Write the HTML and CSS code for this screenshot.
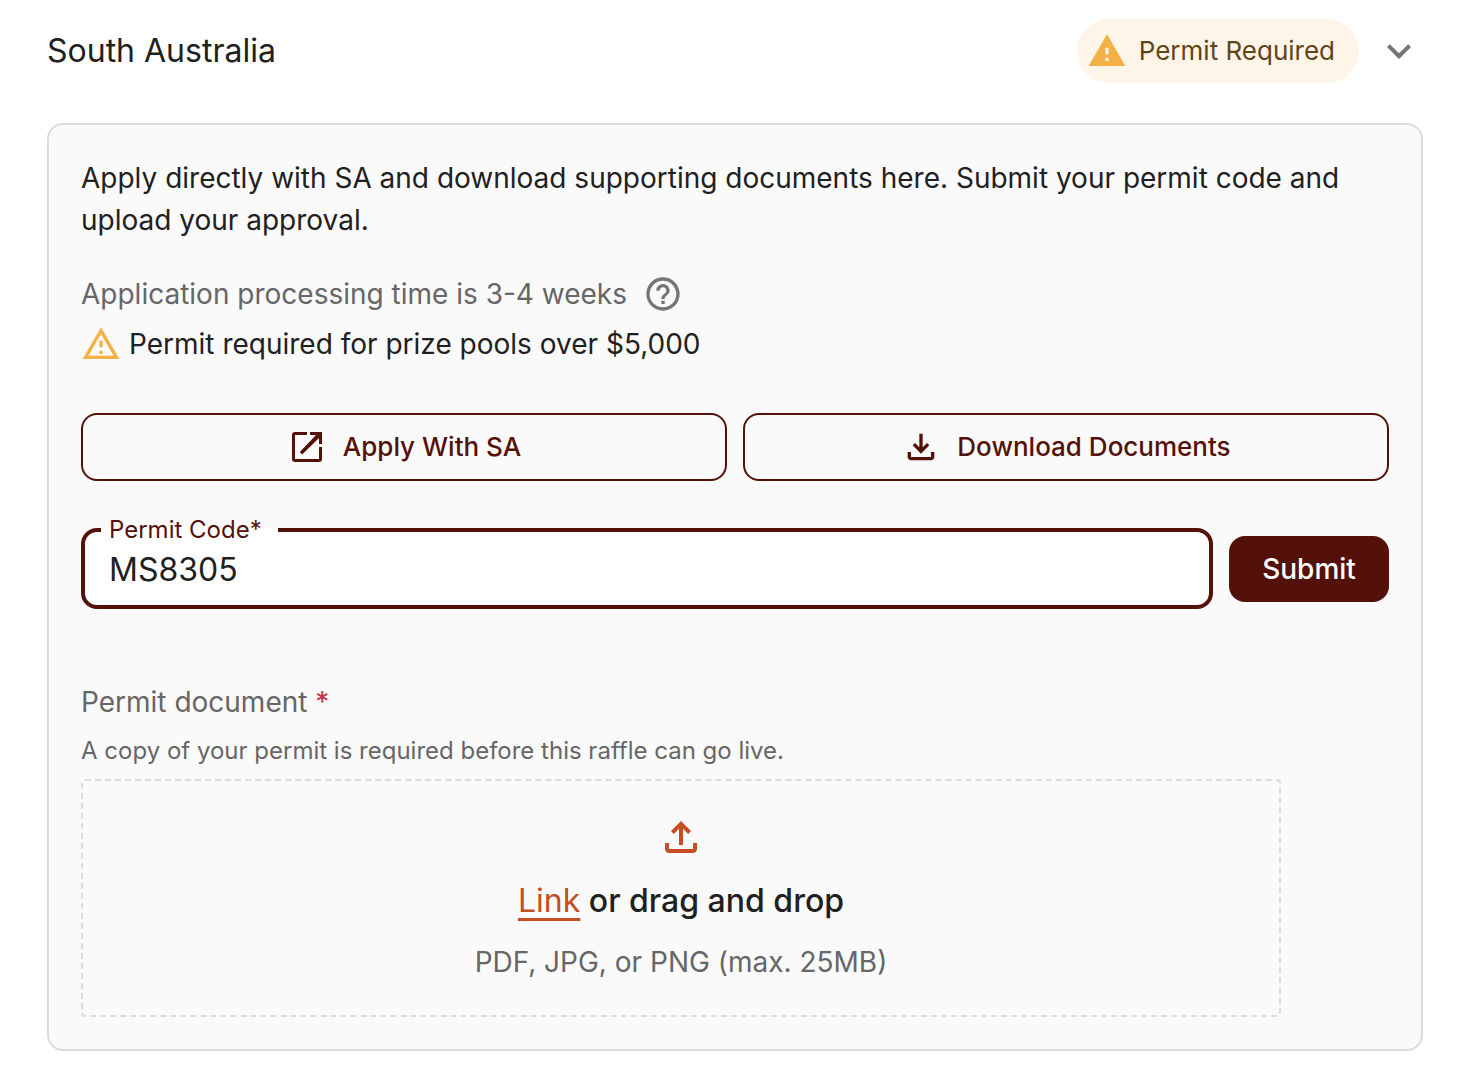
FILE: index.html
```html
<!DOCTYPE html>
<html lang="en">
<head>
    <meta charset="UTF-8">
    <meta name="viewport" content="width=device-width, initial-scale=1.0">
    <title>South Australia - Permit</title>
    <link rel="stylesheet" href="styles.css">
</head>
<body>
    <header class="state-header">
        <h1>South Australia</h1>
        <div class="state-status">
            <span class="badge">
                <svg class="icon icon-warning" viewBox="0 0 24 24" aria-hidden="true"><path d="M1 21h22L12 2 1 21zm12-3h-2v-2h2v2zm0-4h-2v-4h2v4z"/></svg>
                Permit Required
            </span>
            <button type="button" class="toggle" aria-label="Collapse South Australia" aria-expanded="true">
                <svg class="icon-large" viewBox="0 0 24 24" aria-hidden="true"><path d="M16.59 8.59 12 13.17 7.41 8.59 6 10l6 6 6-6z"/></svg>
            </button>
        </div>
    </header>

    <main class="card">
        <p class="intro">Apply directly with SA and download supporting documents here. Submit your permit code and upload your approval.</p>

        <div class="note note-time">
            <span>Application processing time is 3-4 weeks</span>
            <button type="button" class="help" aria-label="Help">
                <svg class="icon" viewBox="0 0 24 24" aria-hidden="true"><path d="M11 18h2v-2h-2v2zm1-16C6.48 2 2 6.48 2 12s4.48 10 10 10 10-4.48 10-10S17.52 2 12 2zm0 18c-4.41 0-8-3.59-8-8s3.59-8 8-8 8 3.59 8 8-3.59 8-8 8zm0-14c-2.21 0-4 1.79-4 4h2c0-1.1.9-2 2-2s2 .9 2 2c0 2-3 1.75-3 5h2c0-2.25 3-2.5 3-5 0-2.21-1.79-4-4-4z"/></svg>
            </button>
        </div>
        <div class="note note-limit">
            <svg class="icon icon-warning" viewBox="0 0 24 24" aria-hidden="true"><path d="M12 5.99 19.53 19H4.47L12 5.99M12 2 1 21h22L12 2zm1 14h-2v2h2v-2zm0-6h-2v4h2v-4z"/></svg>
            <span>Permit required for prize pools over $5,000</span>
        </div>

        <div class="actions">
            <button type="button" class="btn-outline">
                <svg class="icon" viewBox="0 0 40 40" aria-hidden="true">
                    <path class="stroke" d="M20 6.5H8Q6.500 6.500 6.500 8V32Q6.500 33.500 8 33.500H32Q33.500 33.500 33.500 32V20"/>
                    <path d="M23 5H35V17H32V11L15.200 27.400 12.800 25 29 8H23z"/>
                </svg>
                Apply With SA
            </button>
            <button type="button" class="btn-outline">
                <svg class="icon" viewBox="0 -960 960 960" aria-hidden="true"><path d="M480-320 280-520l56-58 104 104v-326h80v326l104-104 56 58-200 200ZM240-160q-33 0-56.500-23.500T160-240v-120h80v120h480v-120h80v120q0 33-23.500 56.500T720-160H240Z"/></svg>
                Download Documents
            </button>
        </div>

        <form class="permit-form">
            <fieldset class="field">
                <legend><label for="permit_code">Permit Code*</label></legend>
                <input type="text" id="permit_code" name="permit_code" value="MS8305" required>
            </fieldset>
            <button type="submit" class="btn-submit">Submit</button>
        </form>

        <h2>Permit document <span class="required">*</span></h2>
        <p class="hint">A copy of your permit is required before this raffle can go live.</p>

        <div class="dropzone">
            <svg class="icon-large" viewBox="0 -960 960 960" aria-hidden="true"><path d="M440-320v-326L336-542l-56-58 200-200 200 200-56 58-104-104v326h-80ZM240-160q-33 0-56.500-23.500T160-240v-120h80v120h480v-120h80v120q0 33-23.500 56.500T720-160H240Z"/></svg>
            <p class="drop-title"><a href="#">Link</a> or drag and drop</p>
            <p class="drop-types">PDF, JPG, or PNG (max. 25MB)</p>
        </div>
    </main>
</body>
</html>
```
FILE: styles.css
```css
* {
    box-sizing: border-box;
}
body {
    margin: 0;
    padding: 19px 53px 35px 47px;
    background-color: #fff;
    color: #1f2020;
    font-family: Inter, sans-serif;
    font-optical-sizing: none;
    font-size: 28px;
    line-height: 42px;
}
h1,
h2,
p {
    margin: 0;
    font-weight: 400;
}
button,
input {
    font: inherit;
    font-optical-sizing: none;
}
button {
    cursor: pointer;
}
svg {
    display: block;
    flex: none;
    fill: currentColor;
}
.icon {
    width: 40px;
    height: 40px;
}
.icon-large {
    width: 48px;
    height: 48px;
}
.icon-warning {
    color: #f3b044;
}

/* Header */
.state-header {
    display: flex;
    justify-content: space-between;
    align-items: center;
    margin-bottom: 40px;
}
h1 {
    font-size: 32px;
}
.state-status {
    display: flex;
    align-items: center;
    gap: 16px;
}
.badge {
    display: flex;
    align-items: center;
    gap: 12px;
    height: 64px;
    padding: 0 24px 0 10px;
    border-radius: 32px;
    background-color: #fef5e8;
    color: #5f4518;
    font-size: 26px;
}
.toggle,
.help {
    padding: 0;
    border: none;
    background: none;
    color: #757575;
}

/* Card */
.card {
    padding: 32px;
    border: 2px solid #dbdbdb;
    border-radius: 16px;
    background-color: #fafafa;
}
.intro {
    margin-bottom: 32px;
}
.note {
    display: flex;
    align-items: center;
    height: 42px;
}
.note-time {
    gap: 16px;
    margin-bottom: 8px;
    color: #666;
}
.note-limit {
    gap: 8px;
}
.actions {
    display: grid;
    grid-template-columns: 1fr 1fr;
    gap: 16px;
    margin: 48px 0 36px;
}
.btn-outline {
    display: flex;
    justify-content: center;
    align-items: center;
    gap: 16px;
    height: 68px;
    border: 2px solid #541109;
    border-radius: 16px;
    background: none;
    color: #541109;
    font-size: 26px;
    font-weight: 500;
}
.stroke {
    fill: none;
    stroke: currentColor;
    stroke-width: 3;
}

/* Permit code */
.permit-form {
    display: flex;
    align-items: flex-end;
    gap: 16px;
    margin-bottom: 72px;
}
.field {
    flex: 1;
    min-width: 0;
    margin: 0;
    padding: 0 16px 10px;
    border: 4px solid #541109;
    border-radius: 16px;
    background-color: #fff;
}
.field legend {
    padding: 0 16px 0 8px;
    color: #541109;
    font-size: 24px;
    line-height: 26px;
}
.field input {
    display: block;
    width: 100%;
    height: 52px;
    padding: 0 8px;
    border: none;
    outline: none;
    background: none;
    color: #1f2020;
    font-size: 32px;
}
.btn-submit {
    height: 66px;
    margin-bottom: 7px;
    min-width: 160px;
    padding: 0 30px;
    border: none;
    border-radius: 16px;
    background-color: #541109;
    color: #fff;
    font-weight: 500;
}

/* Upload */
h2 {
    font-size: 28px;
    color: #666;
}
.required {
    color: #cc3048;
}
.hint {
    margin: 10px 0;
    color: #666;
    font-size: 24px;
    line-height: 36px;
}
.dropzone {
    display: flex;
    flex-direction: column;
    align-items: center;
    gap: 16px;
    max-width: 1200px;
    padding: 32px;
    border: 2px dashed #dbdbdb;
    border-radius: 4px;
    color: #c64d24;
    text-align: center;
}
.drop-title {
    color: #1f2020;
    font-size: 32px;
    font-weight: 500;
    line-height: 48px;
}
.drop-title a {
    color: #c64d24;
    font-weight: 400;
    text-decoration-thickness: 3px;
    text-underline-offset: 6px;
}
.drop-types {
    color: #666;
}
```
